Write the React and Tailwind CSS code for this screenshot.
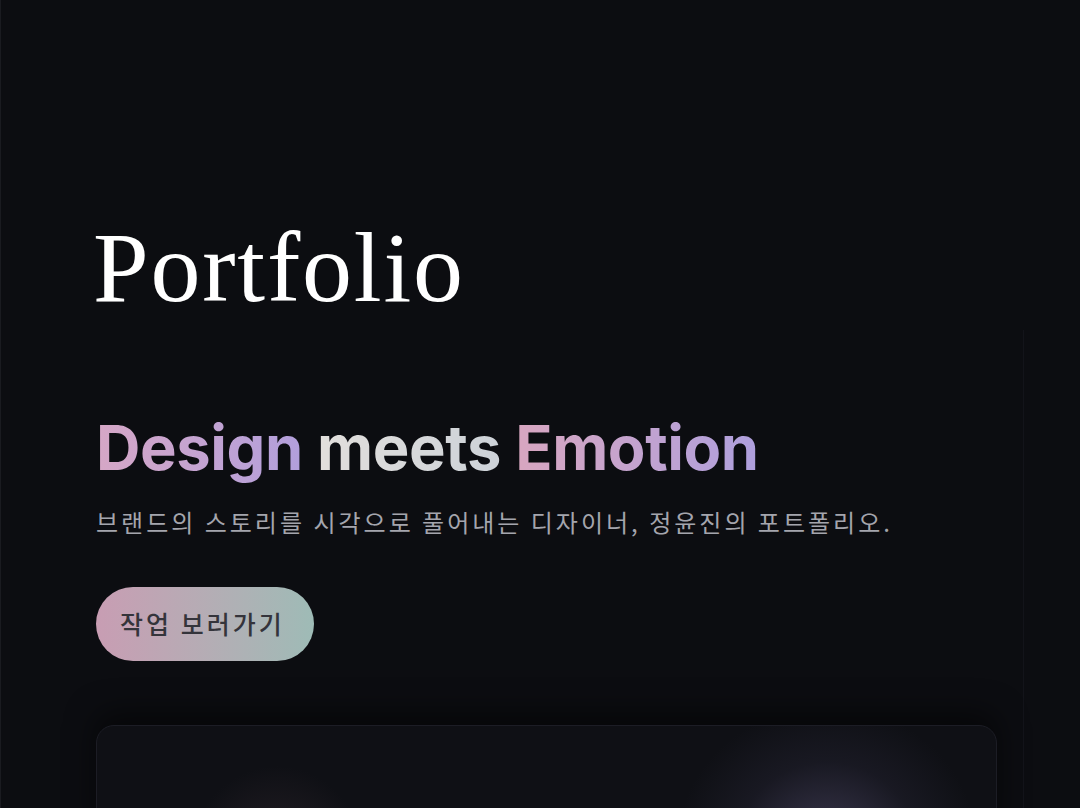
export default function App() {
  return (
    <div className="min-h-[808px] w-full overflow-hidden border-l border-[#1a1b20] bg-[#0c0d11] font-['Inter','Noto_Sans_CJK_KR',sans-serif]">
      <div className="pl-[92px] pt-[213px]">
        <h1 className="font-['Liberation_Serif',serif] text-[100px] leading-[110px] font-normal tracking-[1.8px] text-white">
          Portfolio
        </h1>
      </div>

      <section className="mt-[7px] mr-[56px] border-r border-[#13141a] pt-[80px] pl-[95px] pr-[26px]">
        <h2 className="text-[61.5px] font-bold leading-[76px] tracking-[-0.4px]">
          <span className="bg-gradient-to-r from-[#d6a7c6] to-[#b29fdc] bg-clip-text text-transparent">Design</span>{' '}
          <span className="bg-gradient-to-r from-[#e2dfdc] to-[#cdd2d8] bg-clip-text text-transparent">meets</span>{' '}
          <span className="bg-gradient-to-r from-[#d8a6c0] to-[#ae9fdd] bg-clip-text text-transparent">Emotion</span>
        </h2>

        <p className="mt-[20px] font-['Noto_Sans_CJK_KR',sans-serif] text-[24px] leading-[32px] tracking-[3px] text-[#a4a5ad]">
          브랜드의 스토리를 시각으로 풀어내는 디자이너, 정윤진의 포트폴리오.
        </p>

        <button className="mt-[49px] flex h-[74px] w-[218px] items-center rounded-full bg-gradient-to-r from-[#c89db3] to-[#9ebbb6] pl-[24px] font-['Noto_Sans_CJK_KR',sans-serif] text-[25px] font-medium tracking-[3px] text-[#34343b]">
          작업 보러가기
        </button>

        <div className="relative mt-[64px] h-[120px] w-[901px] overflow-hidden rounded-[18px] border border-[#1c1d25] bg-[#0f1015] shadow-[0_-12px_30px_rgba(0,0,0,0.5)]">
          <div className="absolute left-[580px] top-[-20px] h-[280px] w-[300px] rounded-full bg-[radial-gradient(closest-side,rgba(66,62,88,0.85),rgba(36,35,50,0.45)_60%,transparent)]" />
          <div className="absolute left-[90px] top-[40px] h-[200px] w-[180px] rounded-full bg-[radial-gradient(closest-side,rgba(58,46,54,0.55),transparent)]" />
        </div>
      </section>
    </div>
  )
}
